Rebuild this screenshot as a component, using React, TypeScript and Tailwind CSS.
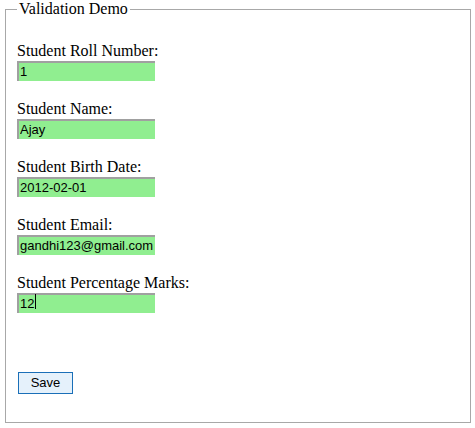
const fields = [
  { label: 'Student Roll Number:', value: '1' },
  { label: 'Student Name:', value: 'Ajay' },
  { label: 'Student Birth Date:', value: '2012-02-01' },
  { label: 'Student Email:', value: 'gandhi123@gmail.com' },
  { label: 'Student Percentage Marks:', value: '12', caret: true },
];

export default function App() {
  return (
    <div className="h-[428px] w-[475px] bg-white pl-[5px] font-['Liberation_Serif',serif] text-black">
      <fieldset className="h-[423px] w-[466px] border border-[#a8a8a8] pb-0 pl-[11px] pr-0 pt-0">
        <legend className="px-[2px] text-[16px] leading-[18px]">Validation Demo</legend>
        <div className="pt-[25px]">
          {fields.map((f) => (
            <div key={f.label} className="mb-[22px] flex flex-col">
              <label className="text-[16px] leading-[16px]">{f.label}</label>
              <div className="relative h-[20px] w-[138px]">
                <input
                  readOnly
                  defaultValue={f.value}
                  className="h-[20px] w-[138px] border-l-2 border-t-2 border-[#a0a0a0] bg-[#90ee90] pl-[1px] font-['Liberation_Sans',Arial,sans-serif] text-[13px] leading-[18px] text-black outline-none"
                />
                {f.caret && <span className="absolute left-[18px] top-[3px] h-[15px] w-px bg-black" />}
              </div>
            </div>
          ))}
          <button className="ml-px mt-[39px] h-[22px] w-[55px] border border-[#1a6fb8] bg-[#e5f1fb] font-['Liberation_Sans',Arial,sans-serif] text-[13px] text-black">
            Save
          </button>
        </div>
      </fieldset>
    </div>
  );
}
